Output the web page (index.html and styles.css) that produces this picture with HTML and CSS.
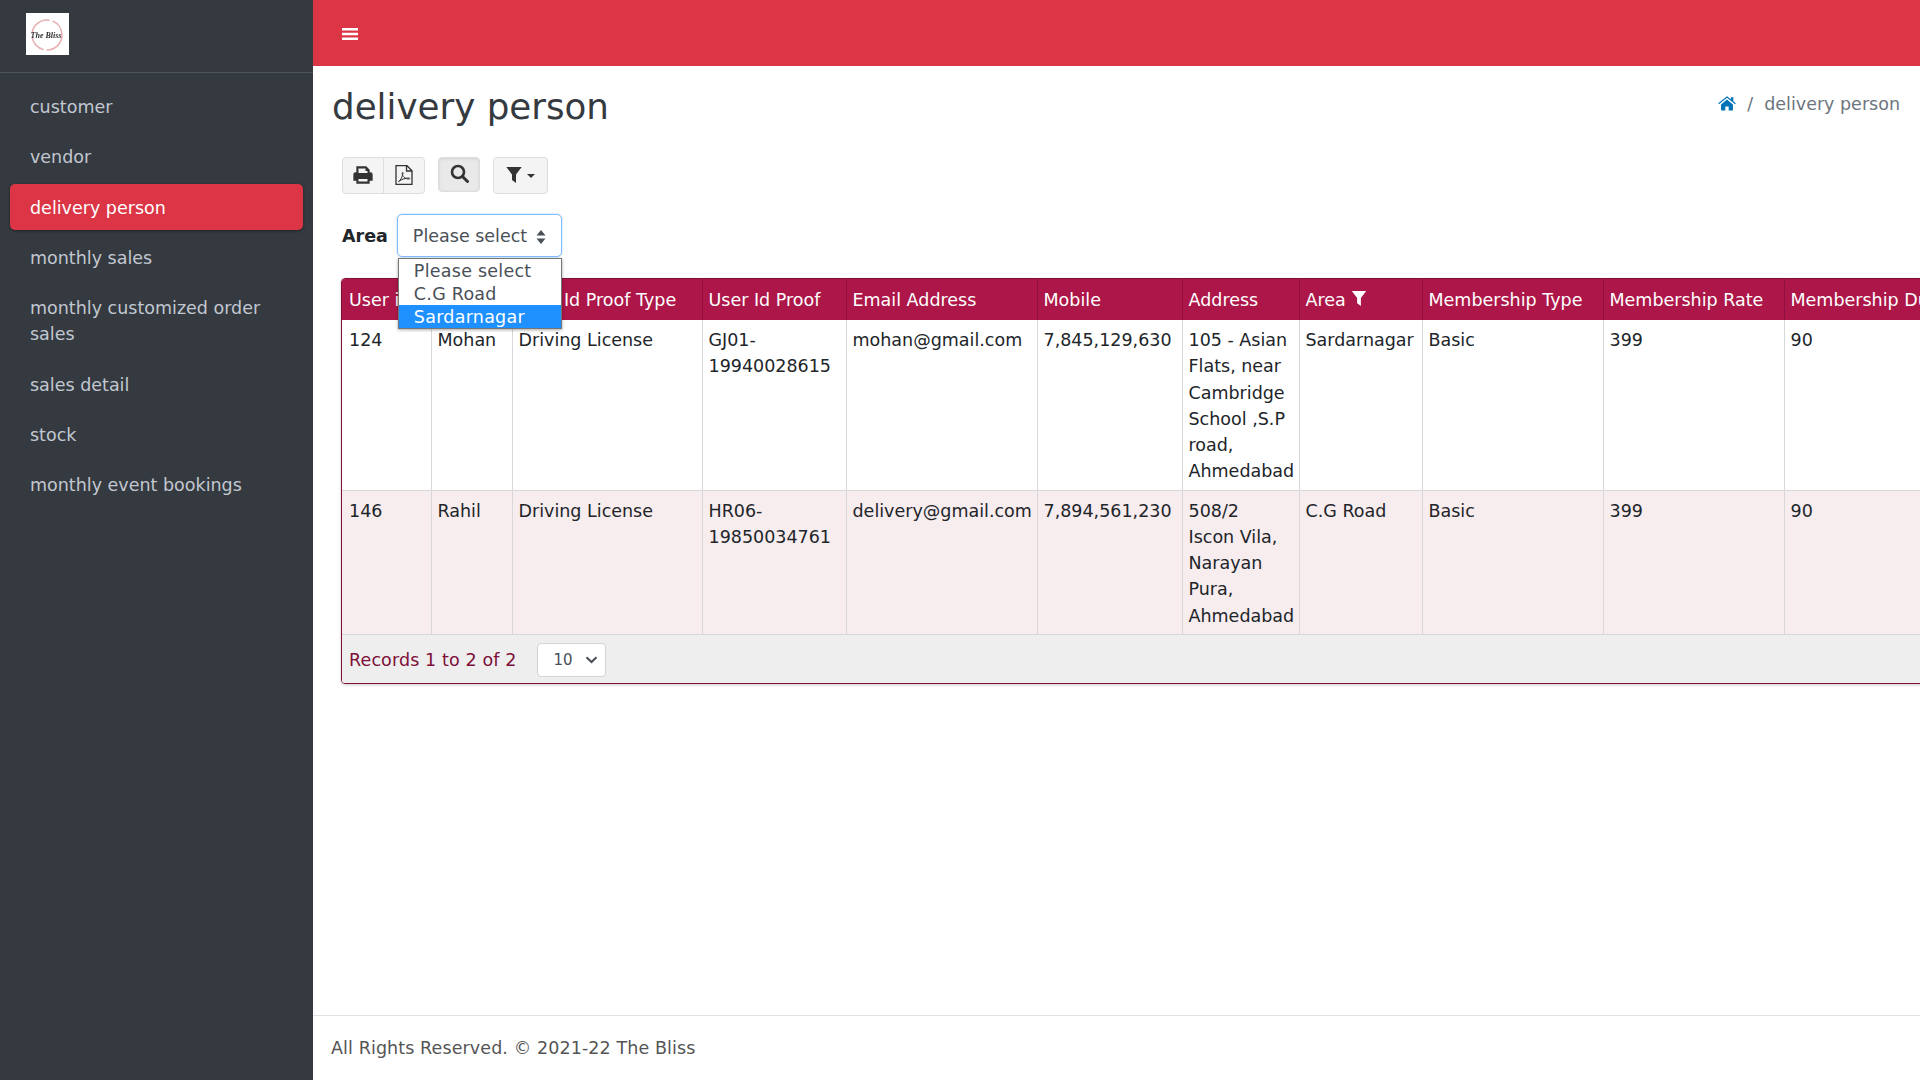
FILE: index.html
```html
<!DOCTYPE html>
<html lang="en">
<head>
    <meta charset="UTF-8">
    <title>delivery person</title>
    <link rel="stylesheet" href="styles.css">
</head>
<body>
    <div class="layout">
        <aside class="sidebar">
            <div class="brand">
                <svg class="logo" viewBox="0 0 43 42">
                    <rect width="43" height="42" fill="#fff"/>
                    <circle cx="21" cy="22" r="15" fill="none" stroke="#e8b0b2" stroke-width="1.6" stroke-dasharray="24 3 18 4"/>
                    <text x="20" y="25" class="logo-text">The Bliss</text>
                </svg>
            </div>
            <nav class="nav">
                <a class="nav-link">customer</a>
                <a class="nav-link">vendor</a>
                <a class="nav-link active">delivery person</a>
                <a class="nav-link">monthly sales</a>
                <a class="nav-link">monthly customized order sales</a>
                <a class="nav-link">sales detail</a>
                <a class="nav-link">stock</a>
                <a class="nav-link">monthly event bookings</a>
            </nav>
        </aside>
        <div class="main">
            <header class="topbar">
                <svg class="bars" viewBox="0 0 16 14"><path d="M0 1h16v2.400H0zM0 5.800h16v2.400H0zM0 10.600h16V13H0z" fill="#fff"/></svg>
            </header>
            <section class="content">
                <div class="page-head">
                    <h1>delivery person</h1>
                    <div class="crumbs">
                        <svg class="home" viewBox="0 0 20 16"><path d="M10 3.600 3.400 9v6.200c0 .3.2.5.5.5h4.200v-4.500h3.800v4.500h4.200c.3 0 .5-.2.5-.5V9zM19.800 7.700 17 5.400V1h-2.600v2.200L10 0 .2 7.700l.8 1L10 1.600l9 7.100z" fill="#0073b7"/></svg>
                        <span class="sep">/</span>
                        <span>delivery person</span>
                    </div>
                </div>
                <div class="toolbar">
                    <div class="btn-group">
                        <button class="tool print-btn">
                            <svg width="20" height="18" viewBox="0 0 20 18"><path d="M4 7V1h9l3 3v3M4 14H1V8.500A1.500 1.500 0 0 1 2.500 7h15A1.500 1.500 0 0 1 19 8.500V14h-3M4 11.500h12V17H4z" fill="#333" stroke="#333" stroke-width="1.300"/><path d="M5.500 2.500h7V5h2v2h-9zM5.500 13h9v2.500h-9z" fill="#f4f4f4"/></svg>
                        </button>
                        <button class="tool pdf-btn">
                            <svg width="18" height="20" viewBox="0 0 18 20"><path d="M1 .7h11l5 5v13.600H1zM11.500 1v5h5.500" fill="none" stroke="#333" stroke-width="1.300"/><path d="M3.500 16.500c2-1 3.500-4 4.500-8 .3-1.500-.8-1.500-.8 0 .2 3 2.500 5.500 6.800 5.500 1 0 1-1 0-1-3 0-7 1-10.500 3.500z" fill="none" stroke="#333" stroke-width="1"/></svg>
                        </button>
                    </div>
                    <button class="tool search-btn">
                        <svg width="19" height="19" viewBox="0 0 19 19"><circle cx="8" cy="8" r="6" fill="none" stroke="#333" stroke-width="2.600"/><path d="m12.500 12.500 5 5" stroke="#333" stroke-width="3" stroke-linecap="round"/></svg>
                    </button>
                    <button class="tool filter-btn">
                        <svg width="16" height="16" viewBox="0 0 16 16"><path d="M.3 0h15.400L10 7.500V16L6 13V7.500z" fill="#333"/></svg>
                        <span class="caret"></span>
                    </button>
                </div>
                <div class="area-row">
                    <label class="area-label">Area</label>
                    <div class="area-select">
                        <span>Please select</span>
                        <svg width="10" height="14" viewBox="0 0 10 14"><path d="M5 0l4.500 5.500H.5zM5 14 .5 8.500h9z" fill="#495057"/></svg>
                        <ul class="area-menu">
                            <li>Please select</li>
                            <li>C.G Road</li>
                            <li class="picked">Sardarnagar</li>
                        </ul>
                    </div>
                </div>
                <div class="grid-wrap">
                    <table class="grid">
                        <colgroup>
                            <col class="c1"><col class="c2"><col class="c3"><col class="c4"><col class="c5"><col class="c6"><col class="c7"><col class="c8"><col class="c9"><col class="c10"><col class="c11"><col class="c12">
                        </colgroup>
                        <thead>
                            <tr>
                                <th>User id</th>
                                <th>Name</th>
                                <th>User Id Proof Type</th>
                                <th>User Id Proof</th>
                                <th>Email Address</th>
                                <th>Mobile</th>
                                <th>Address</th>
                                <th>Area <svg class="th-filter" viewBox="0 0 16 16"><path d="M.3 0h15.400L10 7.500V16L6 13V7.500z" fill="#fff"/></svg></th>
                                <th>Membership Type</th>
                                <th>Membership Rate</th>
                                <th>Membership Duration</th>
                                <th></th>
                            </tr>
                        </thead>
                        <tbody>
                            <tr>
                                <td>124</td>
                                <td>Mohan</td>
                                <td>Driving License</td>
                                <td>GJ01-19940028615</td>
                                <td>mohan@gmail.com</td>
                                <td>7,845,129,630</td>
                                <td>105 - Asian Flats, near Cambridge School ,S.P road, Ahmedabad</td>
                                <td>Sardarnagar</td>
                                <td>Basic</td>
                                <td>399</td>
                                <td>90</td>
                                <td></td>
                            </tr>
                            <tr class="alt">
                                <td>146</td>
                                <td>Rahil</td>
                                <td>Driving License</td>
                                <td>HR06-19850034761</td>
                                <td>delivery@gmail.com</td>
                                <td>7,894,561,230</td>
                                <td>508/2<br>Iscon Vila, Narayan Pura, Ahmedabad</td>
                                <td>C.G Road</td>
                                <td>Basic</td>
                                <td>399</td>
                                <td>90</td>
                                <td></td>
                            </tr>
                        </tbody>
                    </table>
                    <div class="grid-foot">
                        <span class="records">Records 1 to 2 of 2</span>
                        <div class="page-size">
                            <span>10</span>
                            <svg width="13" height="8" viewBox="0 0 13 8"><path d="M1.500 1.200 6.500 6l5-4.800" fill="none" stroke="#495057" stroke-width="2"/></svg>
                        </div>
                    </div>
                </div>
            </section>
            <footer class="foot">All Rights Reserved. © 2021-22 The Bliss</footer>
        </div>
    </div>
</body>
</html>
```

FILE: styles.css
```css
* {
    box-sizing: border-box;
}

html, body {
    height: 100%;
}

body {
    margin: 0;
    overflow: hidden;
    font-family: "DejaVu Sans", Tahoma, sans-serif;
    font-size: 17.5px;
    line-height: 26.25px;
    color: #212529;
    background-color: #fff;
}

.layout {
    display: flex;
    height: 100%;
}

/* sidebar */
.sidebar {
    flex: 0 0 313px;
    background-color: #343a40;
}

.brand {
    height: 73px;
    padding: 13px 0 0 26px;
    border-bottom: 1px solid #4b545c;
}

.logo {
    display: block;
    width: 43px;
    height: 42px;
    filter: blur(0.3px);
}

.logo-text {
    font-family: "Liberation Serif", serif;
    font-style: italic;
    font-weight: bold;
    font-size: 8px;
    text-anchor: middle;
    fill: #333;
}

.nav {
    display: flex;
    flex-direction: column;
    gap: 4px;
    padding: 10px 10px 0;
}

.nav-link {
    padding: 11px 20px 9px;
    border-radius: 5px;
    color: #c2c7d0;
}

.nav-link.active {
    background-color: #dc3545;
    color: #fff;
    box-shadow: 0 1px 3px rgba(0, 0, 0, 0.4);
}

/* main */
.main {
    flex: 1;
    min-width: 0;
    display: flex;
    flex-direction: column;
}

.topbar {
    flex: 0 0 66px;
    display: flex;
    align-items: center;
    padding: 2px 0 0 29px;
    background-color: #dc3545;
}

.bars {
    width: 16px;
    height: 14px;
}

.content {
    flex: 1;
    min-height: 0;
    padding: 0 20px 0 19px;
}

.page-head {
    display: flex;
    justify-content: space-between;
    height: 91px;
    padding-top: 19px;
}

h1 {
    margin: 0;
    font-size: 35.7px;
    font-weight: 400;
    line-height: 44px;
    color: #343a40;
}

.crumbs {
    display: flex;
    align-items: center;
    height: 26px;
    margin-top: 6px;
    color: #6c757d;
}

.home {
    width: 18px;
    height: 15px;
    margin-bottom: 2px;
}

.sep {
    margin: 0 11px;
}

.toolbar {
    display: flex;
    align-items: flex-start;
    gap: 13px;
    padding-left: 10px;
}

.btn-group {
    display: flex;
}

.tool {
    display: flex;
    align-items: center;
    justify-content: center;
    height: 37px;
    padding: 0 0 2px;
    background-color: #f4f4f4;
    border: 1px solid #ddd;
    border-radius: 4px;
}

.print-btn {
    width: 42px;
    border-radius: 4px 0 0 4px;
}

.pdf-btn {
    width: 42px;
    margin-left: -1px;
    border-radius: 0 4px 4px 0;
}

.search-btn {
    width: 42px;
    height: 35px;
    background-color: #e9e9e9;
    box-shadow: inset 0 1px 3px rgba(0, 0, 0, 0.1);
}

.filter-btn {
    width: 55px;
    gap: 5px;
}

.caret {
    width: 0;
    height: 0;
    margin-top: 3px;
    border-top: 4px solid #333;
    border-left: 4px solid transparent;
    border-right: 4px solid transparent;
}

.area-row {
    display: flex;
    align-items: center;
    gap: 9px;
    margin-top: 20px;
    padding-left: 10px;
}

.area-label {
    padding-top: 2px;
    font-weight: 700;
}

.area-select {
    position: relative;
    display: flex;
    align-items: center;
    justify-content: space-between;
    width: 165px;
    height: 43px;
    padding: 2px 15px 0;
    color: #495057;
    border: 1px solid #80bdff;
    border-radius: 5px;
    box-shadow: 0 0 2px rgba(0, 123, 255, 0.4);
}

.area-menu {
    position: absolute;
    top: 43px;
    left: 0;
    z-index: 5;
    width: 164px;
    margin: 0;
    padding: 0;
    list-style: none;
    letter-spacing: 0.25px;
    background-color: #fff;
    border: 1px solid #767676;
    box-shadow: 0 1px 3px rgba(0, 0, 0, 0.35);
}

.area-menu li {
    height: 23px;
    padding: 1px 0 0 15px;
    line-height: 22px;
}

.area-menu .picked {
    background-color: #1e90ff;
    color: #fff;
}

/* table */
.grid-wrap {
    width: 1700px;
    margin: 21px 0 0 9px;
    border: 1px solid #800f3c;
    border-radius: 4px;
    box-shadow: 0 1px 3px rgba(0, 0, 0, 0.2);
    overflow: hidden;
}

.grid {
    width: 100%;
    table-layout: fixed;
    border-collapse: collapse;
}

.c1 { width: 89px; }
.c2 { width: 81px; }
.c3 { width: 190px; }
.c4 { width: 144px; }
.c5 { width: 191px; }
.c6 { width: 145px; }
.c7 { width: 117px; }
.c8 { width: 123px; }
.c9 { width: 181px; }
.c10 { width: 181px; }
.c11 { width: 220px; }

.grid th {
    height: 41px;
    padding: 2px 6px 0;
    text-align: left;
    font-weight: 500;
    color: #fff;
    white-space: nowrap;
    overflow: hidden;
    background-color: #ad1648;
    border-right: 1px solid #8f1140;
}

.grid th:first-child, .grid td:first-child {
    padding-left: 7px;
}

.grid td {
    padding: 7px 6px 5px;
    vertical-align: top;
    border-right: 1px solid #d8d8d8;
    border-bottom: 1px solid #d8d8d8;
}

.grid .alt td {
    background-color: #f7ecee;
}

.th-filter {
    width: 16px;
    height: 15px;
}

.grid-foot {
    display: flex;
    align-items: center;
    gap: 20px;
    height: 48px;
    padding-left: 7px;
    color: #7d0f38;
    background-color: #eee;
}

.records {
    padding-top: 2px;
    letter-spacing: 0.12px;
}

.page-size {
    display: flex;
    align-items: center;
    justify-content: space-between;
    width: 69px;
    height: 34px;
    margin-top: 2px;
    padding: 0 7px 0 16px;
    font-size: 15px;
    color: #495057;
    background-color: #fff;
    border: 1px solid #ced4da;
    border-radius: 4px;
}

.foot {
    flex: 0 0 65px;
    display: flex;
    align-items: center;
    padding: 1px 0 0 18px;
    letter-spacing: 0.1px;
    color: #555;
    border-top: 1px solid #dee2e6;
}
```
